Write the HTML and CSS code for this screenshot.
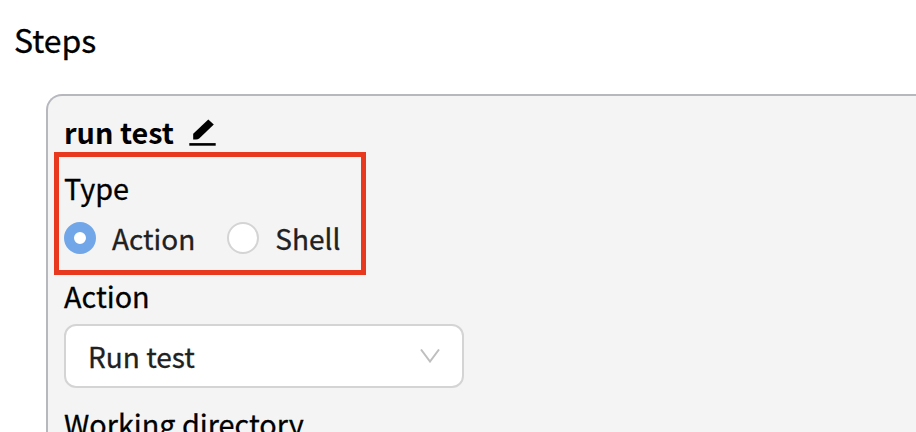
FILE: index.html
```html
<!DOCTYPE html>
<html lang="en">
<head>
<meta charset="utf-8">
<title>Steps</title>
<link rel="stylesheet" href="styles.css">
</head>
<body>
<h1 class="title">Steps</h1>
<section class="step">
  <header class="step-header">
    <span class="step-name">run test</span>
    <svg class="edit-icon" viewBox="0 0 28 28" aria-hidden="true">
      <path d="M4.2 20.5V14.8L19.3 0.4L24.8 5.6L10.2 19.6Q9 20.5 7 20.5Z"/>
      <path d="M0.3 24.1H26.7V26.7H0.3Z"/>
    </svg>
  </header>
  <div class="type-field">
    <div class="label">Type</div>
    <div class="radios">
      <div class="radio"><span class="dot checked"></span><span>Action</span></div>
      <div class="radio"><span class="dot"></span><span>Shell</span></div>
    </div>
    <div class="highlight"></div>
  </div>
  <div class="label">Action</div>
  <div class="select">
    <span>Run test</span>
    <svg class="chevron" viewBox="0 0 20 14" aria-hidden="true"><path d="M1 0.5L10 12.5L19 0.5"/></svg>
  </div>
  <div class="label directory">Working directory</div>
</section>
</body>
</html>
```
FILE: styles.css
```css
* { box-sizing: border-box; }
html, body { height: 100%; }
body {
  margin: 0;
  padding: 19px 0 0 14px;
  overflow: hidden;
  background: #fff;
  color: #000;
  font: 28.8px/40px "Noto Sans CJK JP", "Noto Sans", sans-serif;
  -webkit-text-stroke: 0.3px;
  white-space: nowrap;
}
.title { margin: 0 0 35px; font-size: 32px; font-weight: 400; line-height: 40px; }
.step {
  margin-left: 32px;
  height: 338px;
  padding: 16px 0 0 16px;
  border: 2px solid #b7b7be;
  border-right: 0;
  border-bottom: 0;
  border-radius: 16px 0 0 0;
  background: #f4f4f4;
}
.step-header { display: flex; gap: 15px; height: 40px; }
.step-name { font-weight: 700; -webkit-text-stroke: 0; }
.edit-icon { width: 28px; height: 28px; margin-top: 7px; }
.type-field { position: relative; margin-top: 16px; }
.highlight {
  position: absolute;
  left: -10.5px;
  top: -16px;
  width: 312px;
  height: 123px;
  border: 5px solid #e8391f;
}
.radios { display: flex; gap: 32px; margin-top: 10px; color: #212121; font-size: 28px; }
.radio { display: flex; gap: 16px; }
.dot {
  width: 32px;
  height: 32px;
  margin-top: 4px;
  border: 2px solid #d4d4d4;
  border-radius: 50%;
  background: #fff;
}
.checked { border: 10px solid #71a7e8; }
.type-field + .label { margin-top: 18px; }
.select {
  display: flex;
  align-items: center;
  justify-content: space-between;
  width: 400px;
  height: 64px;
  margin-top: 8px;
  padding: 0 22px;
  border: 2px solid #d4d4d4;
  border-radius: 12px;
  background: #fff;
  color: #212121;
  font-size: 28px;
}
.chevron { width: 20px; height: 14px; fill: none; stroke: #bfbfbf; stroke-width: 2; }
.directory { margin-top: 16px; }
```
